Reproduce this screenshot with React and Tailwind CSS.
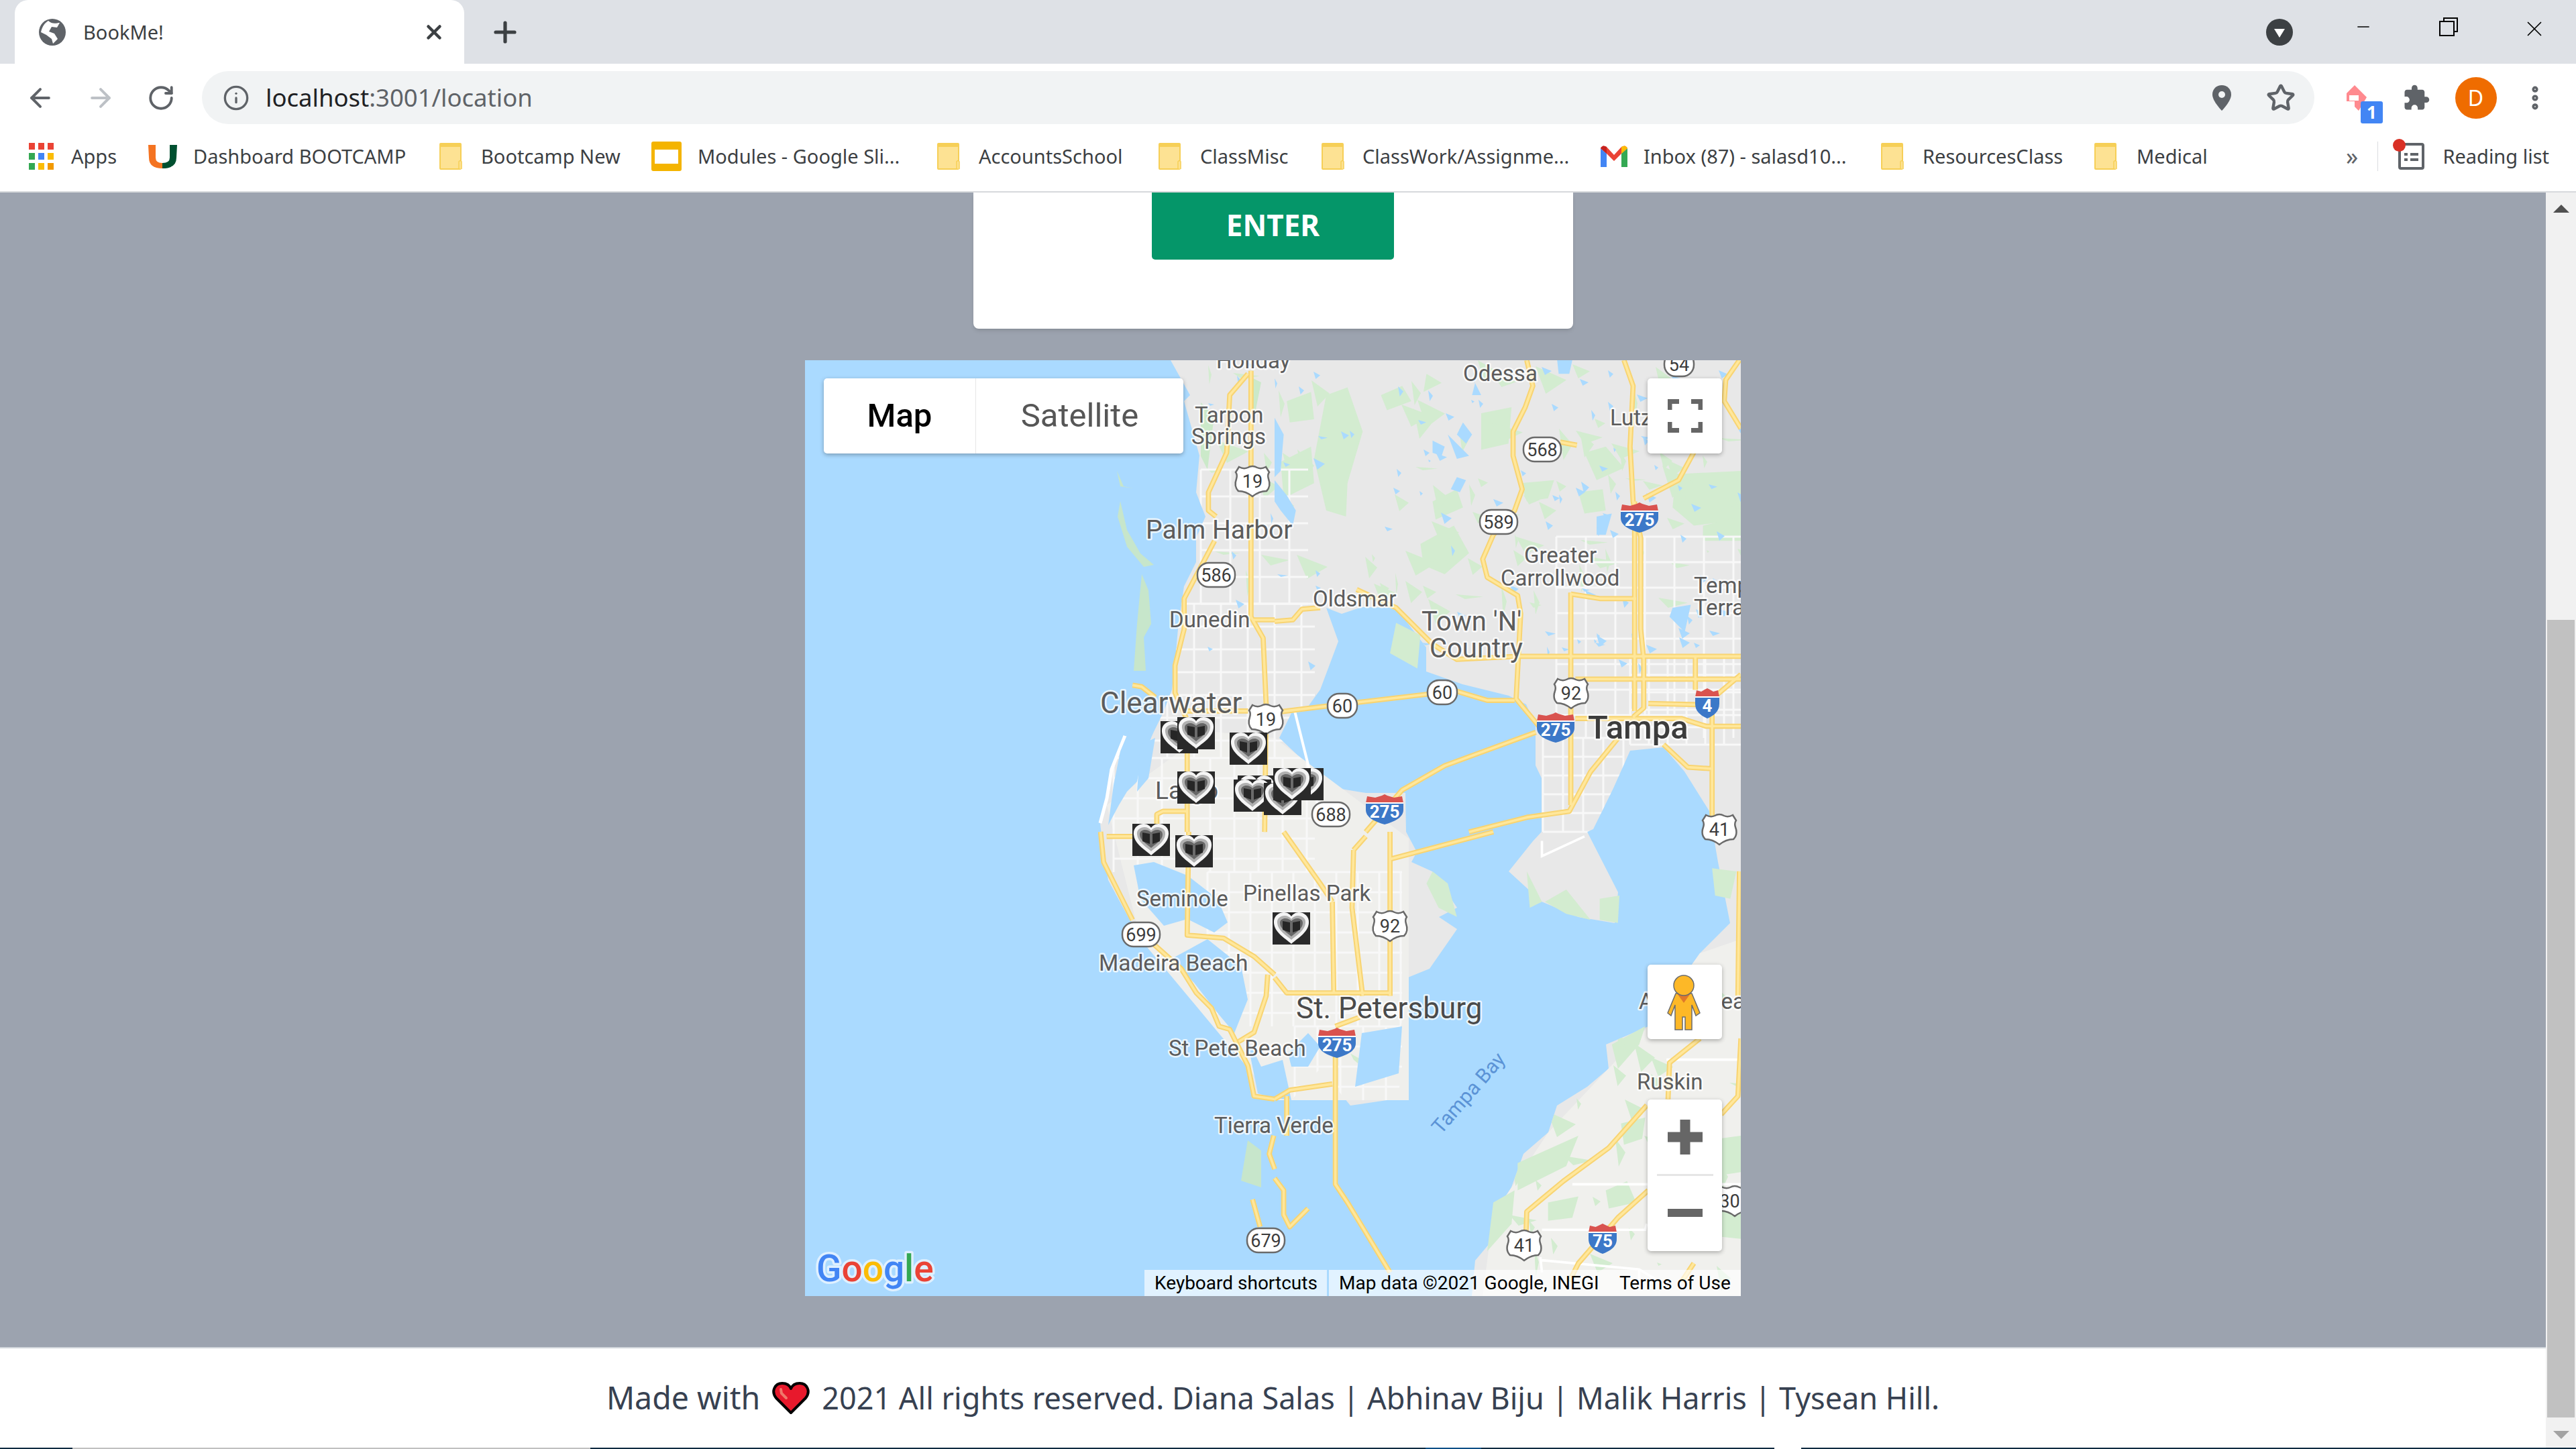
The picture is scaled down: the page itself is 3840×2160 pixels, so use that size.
import { ArrowLeft, ArrowRight, RotateCw, Info, Star, Plus, X, EllipsisVertical, Minus } from "lucide-react";

// ─── Browser chrome icons ────────────────────────────────────────────────
const Globe = () => (
    <svg width="40" height="40" viewBox="0 0 40 40">
        <circle cx="20" cy="20" r="20" fill="#5f6368" />
        <path d="M14 3 C20 9 27 6 31 6 L27 13 L19 12 L15 19 L23 22 L28 30 L21 37 L19 30 L11 24 L3 20 C5 11 9 6 14 3Z" fill="#fff" />
    </svg>
);

const Folder = () => (
    <svg width="34" height="40" viewBox="0 0 34 40">
        <rect x="1" y="1" width="31" height="38" rx="1" fill="#fde293" stroke="#f6cf57" strokeWidth="2" />
        <rect x="1" y="1" width="31" height="5" fill="#f6cf57" />
        <path d="M29 38 L29 28 Q31 25 33 28 L33 39" fill="#fde293" stroke="#f6cf57" strokeWidth="1.5" />
    </svg>
);

const AppsGrid = () => {
    const colors = ["#ea4335", "#ea4335", "#ea4335", "#34a853", "#4285f4", "#fbbc05", "#34a853", "#fbbc05", "#f29900"];
    return (
        <svg width="37" height="40" viewBox="0 0 37 40">
            {colors.map((c, i) => (
                <rect key={i} x={(i % 3) * 14} y={Math.floor(i / 3) * 15} width="9" height="10" fill={c} />
            ))}
        </svg>
    );
};

const ULogo = () => (
    <svg width="43" height="36" viewBox="0 0 43 36">
        <path d="M0 1 L11 1 L11 20 Q11 28 21 28 L21 36 Q1 36 1 20Z" fill="#f47321" />
        <path d="M32 1 L43 1 L42 20 Q42 36 21 36 L21 28 Q32 28 32 20Z" fill="#005030" />
    </svg>
);

const SlidesIcon = () => (
    <svg width="45" height="44" viewBox="0 0 45 44">
        <rect width="45" height="44" rx="3" fill="#f4b400" />
        <rect x="5" y="12" width="35" height="21" fill="#fff" />
    </svg>
);

const GmailIcon = () => (
    <svg width="40" height="32" viewBox="0 0 40 32">
        <path d="M0 4 L0 32 L9 32 L9 12Z" fill="#4285f4" />
        <path d="M31 12 L31 32 L40 32 L40 4Z" fill="#34a853" />
        <path d="M0 4 Q3 -2 9 2 L20 14 L31 2 Q37 -2 40 4 L31 12 L20 23 L9 12Z" fill="#ea4335" />
        <path d="M0 4 Q3 -2 9 2 L9 12Z" fill="#c5221f" />
        <path d="M31 2 Q37 -2 40 4 L31 12Z" fill="#fbbc04" />
    </svg>
);

const ReadingList = () => (
    <div className="relative w-[39px] h-[40px]">
        <svg width="39" height="40" viewBox="0 0 39 40">
            <rect x="2" y="2" width="35" height="36" rx="2" fill="none" stroke="#5f6368" strokeWidth="4" />
            <path d="M9 15h5v4H9zM18 15h12v4H18zM9 23h5v4H9zM18 23h12v4H18z" fill="#5f6368" />
        </svg>
        <span className="absolute left-[-8px] top-[-6px] w-[19px] h-[19px] rounded-full bg-[#d93025]" />
    </div>
);

const bookmarks = [
    { width: "w-[178px]", box: "w-[63px]", icon: <AppsGrid />, label: "Apps" },
    { width: "w-[434px]", box: "w-[67px]", icon: <ULogo />, label: "Dashboard BOOTCAMP" },
    { width: "w-[316px]", box: "w-[62px]", icon: <Folder />, label: "Bootcamp New" },
    { width: "w-[426px]", box: "w-[69px]", icon: <SlidesIcon />, label: "Modules - Google Sli..." },
    { width: "w-[330px]", box: "w-[62px]", icon: <Folder />, label: "AccountsSchool" },
    { width: "w-[243px]", box: "w-[62px]", icon: <Folder />, label: "ClassMisc" },
    { width: "w-[416px]", box: "w-[61px]", icon: <Folder />, label: "ClassWork/Assignme..." },
    { width: "w-[418px]", box: "w-[64px]", icon: <GmailIcon />, label: "Inbox (87) - salasd10..." },
    { width: "w-[318px]", box: "w-[62px]", icon: <Folder />, label: "ResourcesClass" },
    { width: "w-[375px]", box: "w-[63px]", icon: <Folder />, label: "Medical" },
];

const TabStrip = () => (
    <div className="flex h-[95px] bg-[#dee1e6] pl-[22px]">
        <div className="flex items-center w-[670px] h-full bg-white rounded-t-[20px] pl-[36px]">
            <Globe />
            <span className="ml-[26px] flex-1 text-[29px] text-[#3c4043]">BookMe!</span>
            <X size={34} strokeWidth={3.2} className="mr-[28px] text-[#3c4043]" />
        </div>
        <div className="flex items-center ml-[37px] flex-1">
            <Plus size={48} strokeWidth={2.6} className="text-[#3c4043]" />
        </div>
        <div className="flex items-center w-[40px] mr-[91px]">
            <div className="flex items-center justify-center w-[40px] h-[40px] rounded-full bg-[#3c4043]">
                <span className="w-0 h-0 border-x-[8px] border-x-transparent border-t-[13px] border-t-white mt-[3px]" />
            </div>
        </div>
        <div className="flex items-start pt-[24px] h-full mr-[43px]">
            <div className="flex items-center justify-center w-[28px] h-[32px] mr-[99px]">
                <Minus size={30} strokeWidth={1.2} className="text-black" />
            </div>
            <svg width="28" height="28" viewBox="0 0 28 28" className="mr-[95px] mt-[2px]">
                <path d="M7 6 L7 1 L27 1 L27 21 L22 21" fill="none" stroke="#000" strokeWidth="2" />
                <rect x="1" y="6" width="21" height="21" fill="none" stroke="#000" strokeWidth="2" />
            </svg>
            <X size={38} strokeWidth={1.1} className="text-black" />
        </div>
    </div>
);

const Toolbar = () => (
    <div className="flex items-center h-[95px] pt-[6px] pl-[15px] bg-white">
        <div className="flex justify-center w-[90px]"><ArrowLeft size={44} strokeWidth={2.2} className="text-[#5f6368]" /></div>
        <div className="flex justify-center w-[90px]"><ArrowRight size={44} strokeWidth={2.2} className="text-[#bdc1c6]" /></div>
        <div className="flex justify-center w-[90px]"><RotateCw size={42} strokeWidth={2.2} className="text-[#5f6368]" /></div>
        <div className="flex items-center ml-[16px] w-[3149px] h-[79px] rounded-full bg-[#f1f3f4] pl-[31px]">
            <Info size={40} strokeWidth={2} className="text-[#5f6368]" />
            <span className="ml-[24px] flex-1 text-[36.500px] text-[#5f6368]"><span className="text-[#202124]">localhost</span>:3001/location</span>
            <svg width="28" height="38" viewBox="0 0 28 38" className="mr-[52px]">
                <path d="M14 0 C6 0 0 6 0 14 C0 24 14 38 14 38 C14 38 28 24 28 14 C28 6 22 0 14 0Z" fill="#5f6368" />
                <circle cx="14" cy="14" r="5" fill="#f1f3f4" />
            </svg>
            <Star size={44} strokeWidth={2.4} className="mr-[28px] text-[#5f6368]" />
        </div>
        <div className="flex justify-center relative w-[89px] ml-[18px]">
            <svg width="46" height="42" viewBox="0 0 46 42">
                <path d="M8 14 L20 2 L38 20 L26 40 L20 34 L20 26 L8 26Z" fill="#ff8a8f" />
                <path d="M12 17h14v8H12z" fill="#fff" />
            </svg>
            <span className="absolute left-[51px] top-[26px] flex items-center justify-center w-[33px] h-[33px] rounded-[3px] bg-[#4285f4] text-[26px] font-bold text-white">1</span>
        </div>
        <div className="flex justify-center w-[89px]">
            <svg width="42" height="42" viewBox="0 0 24 24" fill="#5f6368">
                <path d="M20.5 11H19V7c0-1.1-.9-2-2-2h-4V3.5C13 2.12 11.88 1 10.5 1S8 2.12 8 3.5V5H4c-1.1 0-2 .9-2 2v3.8h1.5c1.49 0 2.7 1.21 2.7 2.7s-1.21 2.7-2.7 2.7H2V20c0 1.1.9 2 2 2h3.8v-1.5c0-1.49 1.21-2.7 2.7-2.7s2.7 1.21 2.7 2.7V22H17c1.1 0 2-.9 2-2v-4h1.5c1.38 0 2.5-1.12 2.5-2.5S21.88 11 20.5 11z" />
            </svg>
        </div>
        <div className="flex justify-center w-[89px]">
            <span className="flex items-center justify-center w-[62px] h-[62px] rounded-full bg-[#ef6c00] text-[32px] text-white">D</span>
        </div>
        <div className="flex justify-center w-[88px]">
            <EllipsisVertical size={44} strokeWidth={3} className="text-[#5f6368]" />
        </div>
    </div>
);

const BookmarksBar = () => (
    <div className="flex items-center h-[97px] pb-[10px] pl-[43px] pr-[40px] bg-white border-b-2 border-[#d7d9dc] text-[#3c4043] text-[29px]">
        {bookmarks.map((b) => (
            <div key={b.label} className={`flex items-center shrink-0 ${b.width}`}>
                <div className={`flex shrink-0 ${b.box}`}>{b.icon}</div>
                <span className="whitespace-nowrap">{b.label}</span>
            </div>
        ))}
        <span className="w-[50px] text-[36px] text-[#5f6368]">»</span>
        <span className="w-[2px] h-[44px] mr-[30px] bg-[#dadce0]" />
        <ReadingList />
        <span className="ml-[27px] whitespace-nowrap">Reading list</span>
    </div>
);

// ─── Map drawing data ────────────────────────────────────────────────────
const LAND = "M1745 537 L1774 589 L1765 598 L1788 679 L1783 734 L1797 770 L1783 802 L1783 838 L1765 874 L1756 938 L1752 983 L1747 1028 L1735 1060 L1717 1097 L1677 1097 L1657 1147 L1650 1190 L1640 1227 L1643 1254 L1652 1312 L1684 1371 L1720 1408 L1765 1453 L1797 1494 L1815 1530 L1840 1536 L1856 1580 L1869 1634 L1896 1638 L1925 1640 L1968 1593 L2013 1648 L2081 1638 L2099 1575 L2086 1534 L2095 1512 L2099 1457 L2131 1444 L2172 1385 L2145 1367 L2172 1353 L2135 1299 L2104 1285 L2112 1270 L2096 1240 L2095 1182 L2036 1182 L1981 1173 L1960 1150 L1907 1100 L1925 1063 L1945 1060 L1968 1028 L1995 956 L1977 906 L2000 915 L2030 905 L2081 906 L2126 965 L2126 1001 L2180 1020 L2249 1037 L2275 1050 L2289 1082 L2289 1141 L2298 1160 L2298 1240 L2285 1254 L2249 1299 L2298 1344 L2353 1367 L2407 1376 L2412 1330 L2366 1240 L2375 1236 L2405 1175 L2430 1119 L2480 1114 L2511 1150 L2548 1209 L2561 1285 L2579 1376 L2534 1421 L2457 1530 L2394 1557 L2398 1593 L2366 1620 L2321 1648 L2308 1688 L2271 1720 L2253 1770 L2226 1811 L2226 1847 L2199 1879 L2194 1932 L2595 1932 L2595 537Z";

// coordinates in these lists are crop coordinates, see the <g> transforms below
const GREEN_Z5 = [
    "M170 130 L240 105 L290 250 L240 420 L235 530 L170 510 L130 340Z",
    "M480 620 L590 560 L640 650 L560 720 L490 690Z",
    "M680 190 L780 170 L770 290 L680 310Z",
    "M500 60 L550 90 L490 120Z",
    "M1320 390 L1535 380 L1535 540 L1380 560 L1310 500Z",
    "M1410 560 L1535 530 L1535 610 L1410 610Z",
    "M1020 320 L1090 300 L1150 370 L1060 410Z",
    "M1000 450 L1080 440 L1090 510 L1020 520Z",
    "M40 150 L120 120 L130 210 L50 220Z",
    "M20 350 L120 300 L130 420 L30 470Z",
    "M520 480 L600 440 L620 500 L530 540Z",
    "M810 420 L920 410 L900 470 L830 480Z",
    "M350 130 L420 100 L450 150 L370 180Z",
    "M480 920 L400 880 L380 980 L470 1030Z",
];
const GREEN_Z7 = [
    "M520 130 L570 170 L600 280 L540 250 L500 170Z",
    "M890 230 L960 190 L1040 290 L960 270Z",
    "M1070 220 L1135 210 L1130 300 L1070 290Z",
    "M830 130 L880 230 L840 250Z",
    "M1110 700 L1220 640 L1200 700 L1130 780Z",
    "M800 1090 L1000 1000 L960 1100 L800 1180Z",
    "M1090 1180 L1160 1150 L1190 1220 L1100 1240Z",
    "M1140 960 L1220 940 L1210 1010 L1150 1030Z",
    "M900 1220 L1000 1200 L980 1270 L900 1280Z",
    "M720 1220 L790 1180 L780 1290 L700 1380Z",
    "M1460 1010 L1535 1000 L1535 1120 L1470 1130Z",
    "M1440 120 L1520 130 L1500 220 L1450 210Z",
    "M250 730 L340 780 L320 800 L260 750Z",
    "M1400 1240 L1535 1200 L1535 1340 L1440 1330Z",
];

const LAKES_Z5 = [
    "M0 205 L30 260 L20 380 L0 400Z", "M0 410 L40 460 L70 510 L60 560 L20 510 L0 480Z",
    "M620 220 L650 260 L630 290 L600 260Z", "M520 280 L560 300 L550 330 L520 320Z", "M570 260 L640 330 L600 340Z",
    "M600 400 L630 410 L610 450 L580 440Z", "M930 15 L980 15 L970 60 L935 60Z", "M660 90 L680 130 L650 130Z",
    "M1060 530 L1110 520 L1090 590 L1060 590Z", "M1310 830 L1370 820 L1350 910 L1300 860Z",
];

const WATER_INLETS = [
    "M1690 1072 L1725 1075 L1716 1100 L1700 1140 L1695 1165 L1680 1180 L1668 1200 L1652 1230 L1660 1170 L1670 1120Z",
    "M1690 1290 L1720 1285 L1770 1305 L1815 1340 L1830 1375 L1810 1390 L1770 1370 L1735 1380 L1700 1340Z",
    "M1745 1430 L1800 1400 L1850 1440 L1860 1490 L1840 1540 L1815 1510 L1780 1465Z",
    "M1858 1545 L1880 1590 L1912 1580 L1925 1640 L1896 1636 L1875 1630Z",
    "M1950 1540 L1968 1560 L1950 1590 L1925 1590 L1920 1570Z",
    "M2030 1540 L2090 1530 L2085 1600 L2020 1620Z",
    "M1700 1110 L1722 1100 L1712 1160 L1695 1180Z",
];

const YELLOW_Z5 = [
    "M830 15 L850 100 L825 170 L785 250 L785 330 L815 440 L790 510 L720 590 L685 670 L700 730 L800 790 L810 850 L795 1130 L870 1220",
    "M1150 15 L1180 100 L1170 300 L1180 480 L1205 600 L1205 900 L1215 1000 L1215 1160 L1180 1190",
    "M1185 480 L1185 1170",
    "M1215 470 L1330 410 L1390 300",
    "M1535 240 L1480 150 L1485 80 L1530 15",
    "M0 875 L60 870 L90 835 L150 830",
    "M270 770 L400 830 L520 950 L600 1000 L800 990",
    "M800 990 L1535 990",
    "M975 780 L975 1480",
    "M975 785 L1070 800 L1190 800",
    "M990 1065 L1535 1065",
    "M1385 990 L1385 1100",
    "M1535 1050 L1440 1130",
    "M1230 1145 L1430 1150",
    "M990 1195 L1340 1195 L1420 1220 L1535 1220",
    "M1440 1120 L1440 1568",
    "M1280 1280 L1360 1355 L1440 1360",
    "M0 1175 L200 1150 L500 1115 L600 1105 L700 1135 L790 1135",
    "M860 1240 L560 1350 L420 1430 L300 1568",
    "M1130 1260 L1040 1370 L970 1500 L830 1520 L640 1568",
    "M940 285 L995 295",
];
const YELLOW_Z4 = [
    "M1490 50 L1490 860 L1530 930 L1540 1150 L1535 1568",
    "M1480 60 L1420 130 L1410 320 L1350 450 L1350 510 L1375 530",
    "M1370 610 L1270 800 L1270 900 L1240 1020 L1240 1110 L1280 1200 L1280 1568",
    "M1495 870 L1568 870",
    "M1100 1085 L1130 1090 L1175 1125",
    "M1280 1170 L1480 1170",
    "M1180 1568 L1180 1510 L1200 1500 L1280 1500",
];
const YELLOW_Z6 = [
    "M995 0 L1005 100 L1060 210 L1100 290",
    "M1170 370 L1260 450 L1310 530 L1360 580 L1385 640 L1420 650 L1480 770 L1500 870 L1568 880",
    "M1015 15 L1100 15",
    "M1285 0 L1280 340 L1400 350 L1500 410 L1568 470",
    "M1545 470 L1540 540 L1500 660 L1450 690",
    "M1565 1000 L1550 1060 L1568 1110",
    "M1495 1210 L1520 1300",
];
const YELLOW_Z7 = [
    "M380 0 L380 540",
    "M260 60 L255 250 L290 540",
    "M190 230 L195 530",
    "M30 0 L150 170 L190 230",
    "M0 480 L40 530 L380 530",
    "M0 880 L50 850 L190 830",
    "M380 90 L720 0",
    "M200 650 L200 1160 L240 1220 L380 1450",
    "M260 60 L300 15",
    "M200 640 L280 610",
    "M0 1140 L30 1180 L30 1260 L50 1300 L110 1240",
    "M40 870 L40 1000",
    "M1530 130 L1525 540",
    "M1400 680 L1300 760 L1295 880",
    "M1535 680 L1525 870 L1470 930",
    "M1225 900 L1100 1040 L950 1150 L830 1250 L825 1400",
    "M1230 1180 L1130 1270 L1000 1420 L970 1480",
    "M1380 1420 L1340 1480",
];

const WHITE_Z5 = [
    "M115 15 L125 300 L120 480 L60 670 L60 1270",
    "M115 120 L250 70 L330 15",
    "M0 210 L130 220 L220 240 L330 240 L400 260 L550 230 L600 210 L660 230",
    "M400 260 L480 310 L540 410 L640 450 L590 450 L500 480 L500 530 L330 690",
    "M600 100 L640 200 L660 310 L640 450 L630 830",
    "M660 315 L780 315",
    "M840 175 L1000 180 L1100 150 L1150 60",
    "M370 340 L370 390 L480 440",
    "M330 690 L330 770",
    "M210 750 L220 720 L630 745",
    "M480 700 L630 745",
    "M640 405 L710 420 L800 430",
    "M850 345 L850 440 L880 460 L950 480",
    "M990 290 L990 590 L970 780",
    "M810 540 L1180 540",
    "M1090 360 L1170 380",
    "M1080 470 L1150 470 L1150 540",
    "M1330 560 L1530 380",
    "M630 640 L810 640 L880 680",
    "M1330 560 L1330 990",
    "M1000 180 L1120 270 L1170 280",
    "M260 15 L250 70",
    "M1240 330 L1310 360 L1310 540",
    "M920 480 L930 560 L1000 600",
    "M0 640 L60 670 L200 750",
    "M420 620 L480 700 L430 760",
    "M120 480 L150 630 L60 670",
];
const WHITE_Z7 = [
    "M980 1160 L1535 1160",
    "M880 1310 L1220 1310 L1225 1290",
    "M880 1410 L1200 1440 L1300 1500",
    "M875 1400 L880 1450",
    "M1290 750 L1535 750",
    "M880 30 L880 80 L1020 15",
    "M1200 1440 L1200 1510",
];

const toPoints = (list) => list.join(" ");

// tiny scattered ponds and green patches, always the same ones
const scatter = (count, seed, x0, x1, y0, y1, size) => {
    let s = seed;
    const next = () => {
        s = (s * 16807) % 2147483647;
        return s / 2147483647;
    };
    let d = "";
    for (let i = 0; i < count; i++) {
        const x = Math.round(x0 + next() * (x1 - x0));
        const y = Math.round(y0 + next() * (y1 - y0));
        const a = Math.round(4 + next() * size);
        const b = Math.round(4 + next() * size);
        d += `M${x} ${y}L${x + a} ${y + b / 2}L${x + a / 3} ${y + b}Z`;
    }
    return d;
};

// ─── Map parts ───────────────────────────────────────────────────────────
const UsShield = ({ x, y, n }) => (
    <g transform={`translate(${x} ${y})`}>
        <path d="M-20 -21 Q-13 -17 -7 -20 Q0 -24 7 -20 Q13 -17 20 -21 L25 -13 Q22 -9 24 -3 Q28 8 21 15 Q10 15 0 23 Q-10 15 -21 15 Q-28 8 -24 -3 Q-22 -9 -25 -13Z" fill="#fff" stroke="#6a6a6a" strokeWidth="2.5" />
        <text y="10" textAnchor="middle" fontSize="27" fill="#3c3c3c">{n}</text>
    </g>
);

const StateOval = ({ x, y, n, w = 56 }) => (
    <g transform={`translate(${x} ${y})`}>
        <rect x={-w / 2} y="-18" width={w} height="36" rx="17" fill="#fff" stroke="#6a6a6a" strokeWidth="2.5" />
        <text y="10" textAnchor="middle" fontSize="27" fill="#3c3c3c">{n}</text>
    </g>
);

const Interstate = ({ x, y, n, w = 56 }) => (
    <g transform={`translate(${x} ${y})`}>
        <path d={`M${-w / 2} -10 L${w / 2} -10 L${w / 2} 0 C${w / 2} 12 ${w / 4} 18 0 22 C${-w / 4} 18 ${-w / 2} 12 ${-w / 2} 0Z`} fill="#3c78c8" />
        <path d={`M${-w / 2} -10 L${-w / 2 + 2} -20 L${-w / 4} -18 L-4 -21 L0 -23 L4 -21 L${w / 4} -18 L${w / 2 - 2} -20 L${w / 2} -10Z`} fill="#d9534f" />
        <rect x={-w / 2} y="-11" width={w} height="2" fill="#fff" />
        <text y="12" textAnchor="middle" fontSize="26" fontWeight="700" fill="#fff">{n}</text>
    </g>
);

const Marker = ({ x, y }) => (
    <g transform={`translate(${x} ${y})`}>
        <rect width="56" height="48" fill="#2a2a2a" />
        <path d="M28 47 C18 38 3 30 2 16 C1 6 9 0 17 0 C22 0 26 3 28 6 C30 3 34 0 39 0 C47 0 55 6 54 16 C53 30 38 38 28 47Z" fill="#f5f5f5" />
        <path d="M28 41 C20 34 8 27 7 16 C6 9 12 5 18 5 C22 5 26 7 28 10 C30 7 34 5 38 5 C44 5 50 9 49 16 C48 27 36 34 28 41Z" fill="#b0b0b0" />
        <path d="M28 36 C21 30 11 24 11 16 C11 11 15 9 19 9 C23 9 26 11 28 13 C30 11 33 9 37 9 C41 9 45 11 45 16 C45 24 35 30 28 36Z" fill="#666" />
        <path d="M15 13 L26 15 L26 30 L15 26Z M41 13 L30 15 L30 30 L41 26Z" fill="#262626" />
        <rect x="26" y="14" width="4" height="17" fill="#6b6b6b" />
    </g>
);

const Place = ({ x, y, size = 33, weight = 400, color = "#5c5c5c", children }) => (
    <text x={x} y={y} fontSize={size} fontWeight={weight} fill={color} stroke="#ffffff" strokeOpacity="0.75" strokeWidth="5" paintOrder="stroke" strokeLinejoin="round">
        {children}
    </text>
);

const markers = [
    [1730, 1075], [1755, 1069], [1833, 1092], [1755, 1150], [1845, 1156], [1839, 1162],
    [1884, 1167], [1917, 1145], [1898, 1145], [1688, 1228], [1752, 1245], [1897, 1360],
];

const gridLines = (x0, x1, y0, y1, sx, sy) => {
    let d = "";
    for (let x = x0; x <= x1; x += sx) d += `M${x} ${y0}L${x} ${y1}`;
    for (let y = y0; y <= y1; y += sy) d += `M${x0} ${y}L${x1} ${y}`;
    return d;
};

const Roads = ({ list }) => (
    <>
        <path d={toPoints(list)} fill="none" stroke="#f8d472" strokeWidth="17" strokeLinejoin="round" />
        <path d={toPoints(list)} fill="none" stroke="#ffe79b" strokeWidth="8" strokeLinejoin="round" />
    </>
);

const CROP = "scale(0.4529)";

const MapDrawing = () => (
    <svg viewBox="1200 537 1395 1395" width="1395" height="1395" className="block font-['Roboto',sans-serif]">
        <defs>
            <clipPath id="land"><path d={LAND} /></clipPath>
        </defs>
        <rect x="1200" y="537" width="1395" height="1395" fill="#aadaff" />
        <path d={LAND} fill="#e8e8e8" />
        <path d="M2210 1932 L2226 1811 L2308 1688 L2457 1530 L2534 1421 L2595 1400 L2595 1932Z" fill="#f0f0ed" />
        <path d="M1650 1200 L1800 1090 L1900 1100 L2100 1250 L2100 1640 L1900 1640 L1700 1400Z" fill="#efefec" />

        <g transform={`translate(1900 530) ${CROP}`}>
            {GREEN_Z5.map((d) => <path key={d} d={d} fill="#d3ecd0" />)}
        </g>
        <g transform={`translate(1900 1240) ${CROP}`}>
            {GREEN_Z7.map((d) => <path key={d} d={d} fill="#d3ecd0" />)}
        </g>
        <g clipPath="url(#land)">
            <path d={scatter(90, 11, 1800, 2595, 537, 900, 44)} fill="#d3ecd0" />
            <path d={scatter(40, 29, 2250, 2595, 1420, 1900, 40)} fill="#d3ecd0" />
        </g>
        <path d="M1670 747 L1680 790 L1700 825 L1720 842 L1705 845 L1680 815 L1666 770Z M1702 856 L1712 880 L1716 930 L1705 950 L1708 1000 L1690 1000 L1695 930Z M1665 702 L1675 725 L1690 728 L1670 725Z" fill="#c7e6cb" />
        <path d="M1790 600 L1810 620 L1800 700 L1790 680Z M1860 560 L1880 570 L1870 620Z" fill="#cbe9c9" clipPath="url(#land)" />
        <path d="M1860 1700 L1880 1715 L1880 1770 L1850 1760Z" fill="#c7e6cb" />

        <g clipPath="url(#land)" fill="none" stroke="#f8f8f8" strokeWidth="3">
            <path d={gridLines(1790, 1950, 700, 900, 44, 40)} />
            <path d={gridLines(1700, 1960, 900, 1130, 40, 34)} />
            <path d={gridLines(1660, 1960, 1130, 1300, 36, 30)} />
            <path d={gridLines(1800, 2090, 1300, 1530, 32, 30)} />
            <path d={gridLines(1930, 2090, 1530, 1640, 34, 30)} />
            <path d={gridLines(2320, 2595, 800, 1100, 44, 38)} />
            <path d={gridLines(2300, 2420, 1100, 1240, 30, 28)} />
            <path d={gridLines(2430, 2595, 980, 1110, 28, 26)} />
        </g>
        <g transform={`translate(1900 530) ${CROP}`} clipPath="url(#land)">
            <path d={toPoints(WHITE_Z5)} fill="none" stroke="#fff" strokeWidth="8" />
        </g>
        <g transform={`translate(1900 1240) ${CROP}`}>
            <path d={toPoints(WHITE_Z7)} fill="none" stroke="#fff" strokeWidth="8" />
        </g>
        <path d="M1677 1097 L1657 1147 L1650 1190 L1640 1227" fill="none" stroke="#fff" strokeWidth="5" />
        <path d="M1930 1060 L1955 1160 L1972 1232" fill="none" stroke="#fff" strokeWidth="4" />

        {WATER_INLETS.map((d) => <path key={d} d={d} fill="#aadaff" />)}
        <g transform={`translate(1900 530) ${CROP}`}>
            {LAKES_Z5.map((d) => <path key={d} d={d} fill="#aadaff" />)}
        </g>
        <g clipPath="url(#land)">
            <path d={scatter(110, 7, 1800, 2595, 540, 1000, 13)} fill="#aadaff" />
        </g>

        <g transform={`translate(1900 530) ${CROP}`}><Roads list={YELLOW_Z5} /></g>
        <g transform={`translate(1190 530) ${CROP}`}><Roads list={YELLOW_Z4} /></g>
        <g transform={`translate(1190 1240) ${CROP}`}><Roads list={YELLOW_Z6} /></g>
        <g transform={`translate(1900 1240) ${CROP}`}><Roads list={YELLOW_Z7} /></g>

        <UsShield x={1867} y={717} n="19" />
        <UsShield x={1887} y={1072} n="19" />
        <UsShield x={2342} y={1033} n="92" />
        <UsShield x={2072} y={1380} n="92" />
        <UsShield x={2563} y={1236} n="41" />
        <UsShield x={2272} y={1856} n="41" />
        <UsShield x={2586} y={1790} n="301" />
        <StateOval x={1813} y={857} n="586" />
        <StateOval x={2299} y={670} n="568" />
        <StateOval x={2234} y={778} n="589" />
        <StateOval x={2503} y={543} n="54" w={44} />
        <StateOval x={2001} y={1052} n="60" w={44} />
        <StateOval x={2150} y={1032} n="60" w={44} />
        <StateOval x={1984} y={1214} n="688" />
        <StateOval x={1701} y={1393} n="699" />
        <StateOval x={1887} y={1849} n="679" />
        <Interstate x={2444} y={772} n="275" />
        <Interstate x={2319} y={1085} n="275" />
        <Interstate x={2064} y={1207} n="275" />
        <Interstate x={1993} y={1555} n="275" />
        <Interstate x={2545} y={1049} n="4" w={36} />
        <Interstate x={2389} y={1847} n="75" w={42} />

        <Place x={1813} y={549}>Holiday</Place>
        <Place x={2181} y={568}>Odessa</Place>
        <Place x={2400} y={634}>Lutz</Place>
        <Place x={1781} y={630}>Tarpon</Place>
        <Place x={1776} y={662}>Springs</Place>
        <Place x={1708} y={803} size={39}>Palm Harbor</Place>
        <Place x={2272} y={839}>Greater</Place>
        <Place x={2237} y={873}>Carrollwood</Place>
        <Place x={2525} y={884}>Temple</Place>
        <Place x={2525} y={917}>Terrace</Place>
        <Place x={1957} y={904}>Oldsmar</Place>
        <Place x={2119} y={940} size={40}>Town 'N'</Place>
        <Place x={2131} y={980} size={40}>Country</Place>
        <Place x={1743} y={935}>Dunedin</Place>
        <Place x={1640} y={1063} size={44}>Clearwater</Place>
        <Place x={2367} y={1101} size={49} weight={500} color="#3c3c3c">Tampa</Place>
        <Place x={1722} y={1191} size={37}>Largo</Place>
        <Place x={1694} y={1351}>Seminole</Place>
        <Place x={1853} y={1343}>Pinellas Park</Place>
        <Place x={1638} y={1447} size={33.500}>Madeira Beach</Place>
        <Place x={1742} y={1574}>St Pete Beach</Place>
        <Place x={1932} y={1518} size={44} color="#4a4a4a">St. Petersburg</Place>
        <Place x={1810} y={1689}>Tierra Verde</Place>
        <Place x={2440} y={1624}>Ruskin</Place>
        <Place x={2443} y={1504}>Apollo Beach</Place>
        <text transform="translate(2148 1692) rotate(-49)" fontSize="30" fill="#5b93d6">Tampa Bay</text>

        {markers.map(([x, y]) => <Marker key={`${x}-${y}`} x={x} y={y} />)}

        <text x={1217} y={1910} fontSize="55" fontWeight="500" stroke="#dff0ff" strokeWidth="7" paintOrder="stroke" strokeLinejoin="round">
            <tspan fill="#4285f4">G</tspan>
            <tspan fill="#ea4335">o</tspan>
            <tspan fill="#fbbc05">o</tspan>
            <tspan fill="#4285f4">g</tspan>
            <tspan fill="#34a853">l</tspan>
            <tspan fill="#ea4335">e</tspan>
        </text>
    </svg>
);

const GoogleMap = () => (
    <div className="relative w-[1395px] h-[1395px] overflow-hidden font-['Roboto',sans-serif]">
        <MapDrawing />
        <div className="absolute left-[28px] top-[27px] flex h-[112px] rounded-[5px] bg-white shadow-[0_2px_6px_rgba(0,0,0,0.3)] text-[49px]">
            <div className="flex items-center justify-center w-[227px] font-medium text-black border-r border-[#e6e6e6]">Map</div>
            <div className="flex items-center justify-center w-[309px] text-[#565656]">Satellite</div>
        </div>
        <div className="absolute left-[1256px] top-[27px] flex items-center justify-center w-[111px] h-[112px] rounded-[5px] bg-white shadow-[0_2px_6px_rgba(0,0,0,0.3)]">
            <svg width="52" height="50" viewBox="0 0 52 50" fill="none" stroke="#666" strokeWidth="7">
                <path d="M3 16V3.500H17M35 3.500H49V16M49 34V46.500H35M17 46.500H3V34" />
            </svg>
        </div>
        <div className="absolute left-[1256px] top-[901px] flex items-center justify-center w-[111px] h-[111px] rounded-[5px] bg-white shadow-[0_2px_6px_rgba(0,0,0,0.3)]">
            <svg width="111" height="111" viewBox="0 0 111 111">
                <path d="M42 43 L66 43 L78 72 L72 76 L66 60 L66 97 L56 97 L56 78 L52 78 L52 97 L41 97 L41 60 L35 76 L30 72Z" fill="#fdb827" stroke="#6b6b6b" strokeWidth="1.500" />
                <path d="M44 43 L64 43 L54 57Z" fill="#e0782a" />
                <circle cx="54" cy="31" r="15" fill="#fdb827" stroke="#6b6b6b" strokeWidth="1.500" />
            </svg>
        </div>
        <div className="absolute left-[1256px] top-[1102px] flex flex-col items-center w-[111px] h-[226px] rounded-[5px] bg-white shadow-[0_2px_6px_rgba(0,0,0,0.3)]">
            <svg width="52" height="52" viewBox="0 0 52 52" className="mt-[30px]" fill="#666">
                <path d="M18.500 0h15v18.500H52v15H33.500V52h-15V33.500H0v-15h18.500z" />
            </svg>
            <span className="w-[84px] h-[3px] mt-[29px] bg-[#e6e6e6]" />
            <span className="w-[52px] h-[12px] mt-[49px] bg-[#666]" />
        </div>
        <div className="absolute right-0 bottom-0 flex items-center gap-[3px] h-[39px] text-[28px] text-black whitespace-nowrap">
            <span className="flex items-center h-full w-[272px] pl-[15px] bg-white/65">Keyboard shortcuts</span>
            <span className="flex items-center h-full w-[614px] pl-[15px] bg-white/65">
                <span className="w-[418px]">Map data ©2021 Google, INEGI</span>
                <span>Terms of Use</span>
            </span>
        </div>
    </div>
);

// ─── Page ────────────────────────────────────────────────────────────────
const Scrollbar = () => (
    <div className="flex flex-col items-center w-[45px] pt-[18px] bg-[#f1f1f1]">
        <span className="w-0 h-0 border-x-[12px] border-x-transparent border-b-[12px] border-b-[#505050]" />
        <div className="w-[41px] flex-1 mt-[607px] mb-[20px] bg-[#c1c1c1]" />
        <span className="w-0 h-0 mb-[13px] border-x-[12px] border-x-transparent border-t-[12px] border-t-[#a3a3a3]" />
    </div>
);

const TaskbarEdge = () => (
    <div className="flex h-[2px]">
        <span className="w-[108px] bg-[#0f2a40]" />
        <span className="w-[772px] bg-[#c0c0c0]" />
        <span className="w-[1245px] bg-[#0f2a40]" />
        <span className="w-[83px] bg-[#0d4f86]" />
        <span className="w-[437px] bg-[#0f2a40]" />
        <span className="w-[40px] bg-white" />
        <span className="flex-1 bg-[#0f2a40]" />
    </div>
);

const FooterHeart = () => (
    <svg width="56" height="50" viewBox="0 0 56 50" className="mx-[18px] shrink-0">
        <path d="M28 47 L6 25 C-2 15 4 3 15 3 C21 3 26 6 28 11 C30 6 35 3 41 3 C52 3 58 15 50 25Z" fill="#e8192c" stroke="#000" strokeWidth="4" strokeLinejoin="round" />
        <path d="M13 12 L14 18 L21 25" fill="none" stroke="#f0786a" strokeWidth="4" strokeLinecap="round" />
    </svg>
);

export default function App() {
    return (
        <div className="flex flex-col w-[3840px] h-[2160px] overflow-hidden font-['Noto_Sans',sans-serif]">
            <TabStrip />
            <Toolbar />
            <BookmarksBar />
            <div className="flex flex-1 min-h-0">
                <main className="flex flex-col flex-1 bg-[#9ca3af]">
                    <div className="flex flex-col items-center">
                        <div className="flex justify-center w-[894px] h-[203px] rounded-b-[8px] bg-white shadow-md">
                            <button className="w-[361px] h-[100px] pb-[4px] rounded-b-[5px] bg-[#059669] text-[44px] font-bold text-white">ENTER</button>
                        </div>
                        <div className="mt-[47px]">
                            <GoogleMap />
                        </div>
                    </div>
                    <footer className="flex items-center justify-center mt-[76px] flex-1 bg-white border-t-2 border-[#d1d5db] text-[#374151]">
                        <span className="text-[46.500px]">Made with</span>
                        <FooterHeart />
                        <span className="text-[45px]">2021 All rights reserved. Diana Salas | Abhinav Biju | Malik Harris | Tysean Hill.</span>
                    </footer>
                </main>
                <Scrollbar />
            </div>
            <TaskbarEdge />
        </div>
    );
}
